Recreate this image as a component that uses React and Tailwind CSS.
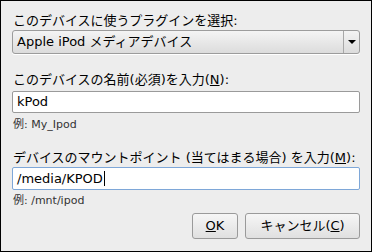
import React from 'react';

// KDE-style "add device" dialog
export default function App() {
  return (
    <div
      className="w-[372px] h-[252px] border border-black bg-[#ededed] px-[11px] pt-[11px] flex flex-col text-black"
      style={{ fontFamily: '"DejaVu Sans", "Noto Sans CJK JP", sans-serif' }}
    >
      {/* Plugin selector */}
      <div className="h-[17px] leading-[17px] text-[13px] pl-[1px]">このデバイスに使うプラグインを選択:</div>
      <div className="mt-[1px] h-[24px] flex border border-[#9c9c9c] rounded-[3px] bg-gradient-to-b from-[#f4f4f4] to-[#dcdcdc] shadow-[0_1px_0_#ffffff]">
        <div className="flex-1 flex items-center pl-[4px] text-[13px]">Apple iPod メディアデバイス</div>
        <div className="w-[16px] border-l border-[#a8a8a8] flex items-center justify-center">
          <div className="w-0 h-0 border-l-[4px] border-r-[4px] border-t-[4px] border-l-transparent border-r-transparent border-t-black" />
        </div>
      </div>

      {/* Device name */}
      <div className="mt-[17px] h-[17px] leading-[17px] text-[13px] pl-[1px]">
        このデバイスの名前(必須)を入力(<span className="underline">N</span>):
      </div>
      <div className="mt-[3px] h-[22px] flex items-center bg-white border border-[#9a9a9a] rounded-[2px] pl-[4px] text-[13px]">
        kPod
      </div>
      <div className="mt-[5px] h-[14px] leading-[14px] text-[11px] text-[#333] pl-[1px]">例: My_Ipod</div>

      {/* Mount point */}
      <div className="mt-[17px] h-[17px] leading-[17px] text-[13px] pl-[1px]">
        デバイスのマウントポイント (当てはまる場合) を入力(<span className="underline">M</span>):
      </div>
      <div className="mt-[1px] h-[23px] flex items-center bg-white border border-[#7ea7d8] rounded-[2px] pl-[4px] text-[13px]">
        /media/KPOD<span className="inline-block w-[1px] h-[15px] bg-black ml-[1px]" />
      </div>
      <div className="mt-[4px] h-[14px] leading-[14px] text-[11px] text-[#333] pl-[1px]">例: /mnt/ipod</div>

      {/* Buttons */}
      <div className="mt-[5px] flex justify-end gap-[7px]">
        <button className="w-[46px] h-[26px] border border-[#9a9a9a] rounded-[3px] bg-gradient-to-b from-[#f6f6f6] to-[#e0e0e0] text-[13px]">
          <span className="underline">O</span>K
        </button>
        <button className="w-[115px] h-[26px] border border-[#9a9a9a] rounded-[3px] bg-gradient-to-b from-[#f6f6f6] to-[#e0e0e0] text-[13px]">
          キャンセル(<span className="underline">C</span>)
        </button>
      </div>
    </div>
  );
}
